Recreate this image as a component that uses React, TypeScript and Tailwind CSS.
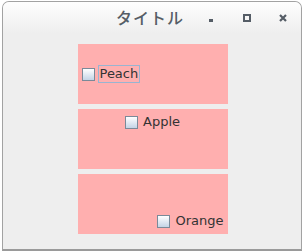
import React from 'react';

const Box: React.FC = () => (
  <span className="inline-block w-[13px] h-[13px] shrink-0 border border-[#7a8a99] bg-gradient-to-b from-[#ffffff] to-[#c4d4e6]" />
);

const Check: React.FC<{label: string; focused?: boolean}> = ({label, focused}) => (
  <div className="flex items-center gap-[3px]">
    <Box />
    <span className={`px-[1px] leading-[16px] ${focused ? 'border border-[#99b4d1]' : 'border border-transparent'}`}>{label}</span>
  </div>
);

export default function App() {
  return (
    <div className="w-[304px] h-[252px] bg-white pl-[2px] pt-[1px] pr-[2px] pb-[1px] text-[13px] text-[#333333]" style={{fontFamily: '"DejaVu Sans", "Noto Sans CJK JP", sans-serif'}}>
      <div className="w-full h-full flex flex-col border border-[#a2a2a2] border-b-2 border-b-[#9a9a9a] rounded-t-[7px] overflow-hidden bg-[#eeeeee]">
        <div className="h-[31px] shrink-0 flex items-center bg-gradient-to-b from-[#fefefe] to-[#eeeeee]">
          <div className="flex-1" />
          <span className="text-[16px] font-medium text-[#555d66] tracking-[1px] mr-[23px] mt-[2px]">タイトル</span>
          <div className="flex items-center gap-[28px] pr-[14px] text-[#555d66]">
            <span className="w-[8px] h-[8px] flex items-end justify-center"><span className="w-[4px] h-[3px] bg-[#555d66]" /></span>
            <span className="w-[8px] h-[8px] border-2 border-[#555d66]" />
            <svg width="8" height="8" viewBox="0 0 8 8"><path d="M1 1L7 7M7 1L1 7" stroke="#555d66" strokeWidth="2.2" /></svg>
          </div>
        </div>
        <div className="flex flex-col items-center gap-[5px] pt-[11px] pl-[1px]">
          <div className="w-[150px] h-[60px] bg-[#ffafaf] flex items-center pl-[4px]">
            <Check label="Peach" focused />
          </div>
          <div className="w-[150px] h-[60px] bg-[#ffafaf] flex justify-center items-start pt-[4px] pl-[2px]">
            <Check label="Apple" />
          </div>
          <div className="w-[150px] h-[60px] bg-[#ffafaf] flex justify-end items-end pr-[2px] pb-[4px]">
            <Check label="Orange" />
          </div>
        </div>
      </div>
    </div>
  );
}
